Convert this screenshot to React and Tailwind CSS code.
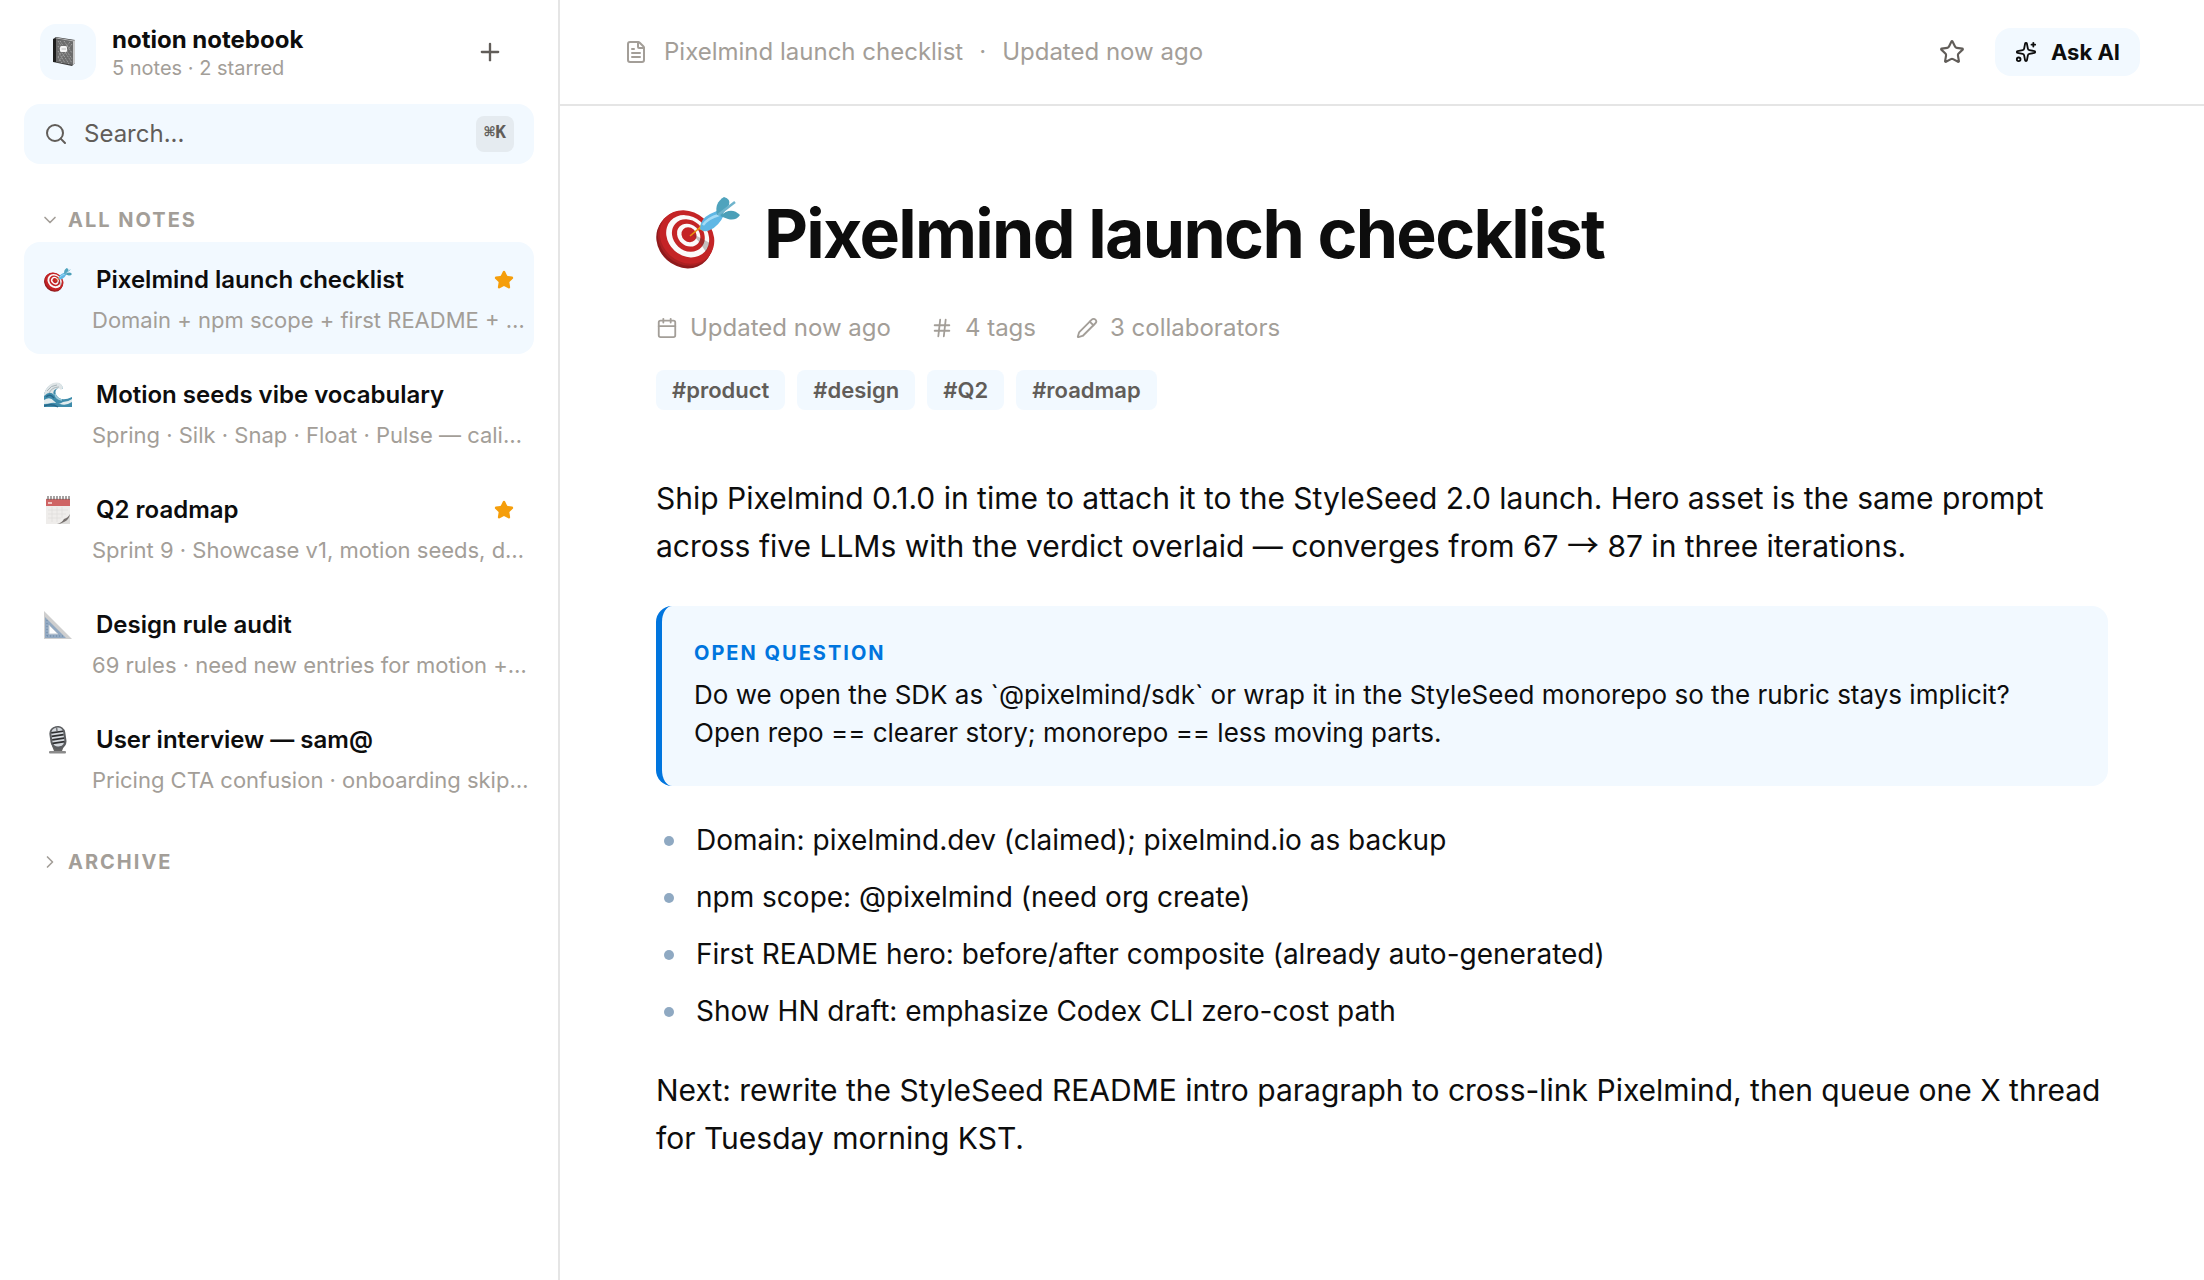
import React, { useState } from "react";
import {
  Calendar,
  ChevronDown,
  ChevronRight,
  FileText,
  Hash,
  Pencil,
  Plus,
  Search,
  Sparkles,
  Star,
} from "lucide-react";

function TargetIcon({ className }) {
  return (
    <svg viewBox="0 0 84 72" className={className} aria-hidden="true">
      <g transform="rotate(42 31 40)">
        <ellipse cx="31.500" cy="45" rx="29.500" ry="25.500" fill="#8f1a1c" />
        <ellipse cx="31" cy="42" rx="29.500" ry="25.500" fill="#ab2022" />
        <ellipse cx="31" cy="40" rx="29" ry="25" fill="#c42426" />
        <ellipse cx="31" cy="39" rx="23" ry="19.500" fill="#fbfafa" />
        <ellipse cx="31" cy="38" rx="17.500" ry="15" fill="#c42426" />
        <ellipse cx="31" cy="37.500" rx="12.500" ry="10.500" fill="#fbfafa" />
        <ellipse cx="31" cy="37" rx="8" ry="7" fill="#c42426" />
      </g>
      <path d="M37 37 L54 46 L50 55 Q44 45 37 38Z" fill="#4a3a3a" opacity=".3" />
      <path d="M34 39 L47 28" stroke="#e8960c" strokeWidth="1.600" />
      <path d="M42 32 L46 26 L48 34Z" fill="#f0a21c" />
      <path d="M44 32 Q44 22 54 17 L63 13 L68 18 Q63 29 54 33 Q48 36 44 32Z" fill="#5fb7e5" />
      <path d="M47 28 Q52 21 63 18" stroke="#a5dbf5" strokeWidth="2.500" fill="none" />
      <path d="M61 18 Q58 6 68 0 Q75 2 73 8 L66 18Z" fill="#4fa3bd" />
      <path d="M64 19 Q75 9 84 18 Q80 24 72 22Z" fill="#4b9fb8" />
      <path d="M62 18 L79 5" stroke="#6fb4cc" strokeWidth="2.500" />
    </svg>
  );
}

function WaveIcon({ className }) {
  return (
    <svg viewBox="0 0 28 26" className={className} aria-hidden="true">
      <path d="M0 25V12Q3 3 11 1Q18 0 19 7Q15 4 12 8Q10 12 15 16Q20 19 28 15V25Z" fill="#3f8cab" />
      <path d="M0 12Q2 4 9 1Q17-1 19 6L17 8Q15 5 12 7Q8 9 10 13Q6 8 0 14Z" fill="#dfe5e7" />
      <path d="M3 9Q7 3 13 3M5 11Q8 5 15 5" stroke="#a9b5ba" fill="none" />
      <path d="M0 18Q6 14 10 19T19 20Q24 20 28 17V20Q22 24 16 22T7 21T0 22Z" fill="#e3ecee" />
      <path d="M2 15Q6 11 10 16M0 24Q8 21 14 25" stroke="#27678a" strokeWidth="1.500" fill="none" />
      <path d="M11 12Q12 17 18 18" stroke="#9cc9d9" strokeWidth="1.500" fill="none" />
    </svg>
  );
}

function PlannerIcon({ className }) {
  return (
    <svg viewBox="0 0 28 28" className={className} aria-hidden="true">
      <rect x="2" y="2" width="24" height="26" fill="#efedeb" />
      <rect x="2" y="3" width="24" height="7" fill="#cf6464" />
      <path d="M4 0V4M7 0V4M10 0V4M13 0V4M16 0V4M19 0V4M22 0V4M25 0V4" stroke="#6c6666" strokeWidth="1.200" />
      <rect x="4" y="6" width="4" height="2" fill="#efc5c2" />
      <path d="M4 14H24M4 18H22M4 22H17M8 11V26M13 11V26M18 11V22" stroke="#dfddda" strokeWidth=".7" />
      <path d="M13 28Q19 26 20 23Q24 22 26 18V28Z" fill="#dedddb" />
      <path d="M13 28Q18 27 20 23Q24 22 26 18Q25 24 20 26Q17 28 13 28Z" fill="#77716f" />
    </svg>
  );
}

function SetSquareIcon({ className }) {
  return (
    <svg viewBox="0 0 28 28" className={className} aria-hidden="true">
      <path d="M0 0L28 28H0Z" fill="#cfcfcf" />
      <path d="M1 6L22 27H1Z" fill="#92a9c2" />
      <path d="M5 14L14 23H5Z" fill="#ffffff" stroke="#c3cbd3" />
      <path d="M3 9V26M3 25H20" stroke="#6d87a3" strokeWidth="1" strokeDasharray="1 2" />
    </svg>
  );
}

function MicIcon({ className }) {
  return (
    <svg viewBox="0 0 28 28" className={className} aria-hidden="true">
      <path d="M8 20L10 25H18L20 20Z" fill="#636363" />
      <rect x="5" y="25" width="17" height="2.500" rx="1" fill="#8b8b8b" />
      <g transform="rotate(-8 14 12)">
        <rect x="6" y="0" width="16" height="23" rx="7.500" fill="#5c5e61" />
        <rect x="8" y="1.500" width="12" height="19" rx="5.500" fill="#d5d9de" />
        <path d="M8 6H20M8 9.500H20M8 13H20M8 16.500H20" stroke="#2d2e30" strokeWidth="1.700" />
        <path d="M14 0V5" stroke="#77797c" strokeWidth="1.500" />
      </g>
    </svg>
  );
}

function NotebookIcon({ className }) {
  return (
    <svg viewBox="0 0 24 30" className={className} aria-hidden="true">
      <path d="M1 2L4 0L23 3V26L20 29L1 25Z" fill="#3b3b3b" />
      <path d="M4 2L21 4V28L4 25Z" fill="#6c6c6c" />
      <path d="M1 2L4 2V25L1 25Z" fill="#1e1e1e" />
      <path d="M21 4L23 3V26L21 28Z" fill="#c9c9c9" />
      <path d="M6 4L20 26M8 4L20 22M12 4L20 16M6 9L17 27M6 14L13 26M6 20L10 26M20 7L7 24M18 5L6 20" stroke="#b5b5b5" strokeWidth=".9" strokeDasharray="1 1" />
      <path d="M4 1L22 4" stroke="#bdbdbd" strokeWidth="1" />
      <rect x="8" y="9" width="7" height="6" rx="1.500" fill="#f5f5f5" />
      <path d="M9.500 12H14" stroke="#aaaaaa" strokeWidth=".8" />
    </svg>
  );
}

const notes = [
  { title: "Pixelmind launch checklist", preview: "Domain + npm scope + first README + …", Icon: TargetIcon, starred: true },
  { title: "Motion seeds vibe vocabulary", preview: "Spring · Silk · Snap · Float · Pulse — cali…", Icon: WaveIcon },
  { title: "Q2 roadmap", preview: "Sprint 9 · Showcase v1, motion seeds, d…", Icon: PlannerIcon, starred: true },
  { title: "Design rule audit", preview: "69 rules · need new entries for motion +…", Icon: SetSquareIcon },
  { title: "User interview — sam@", preview: "Pricing CTA confusion · onboarding skip…", Icon: MicIcon },
];

const tags = ["#product", "#design", "#Q2", "#roadmap"];

const tasks = [
  "Domain: pixelmind.dev (claimed); pixelmind.io as backup",
  "npm scope: @pixelmind (need org create)",
  "First README hero: before/after composite (already auto-generated)",
  "Show HN draft: emphasize Codex CLI zero-cost path",
];

function SectionToggle({ open, children }) {
  const Chevron = open ? ChevronDown : ChevronRight;
  return (
    <button type="button" aria-expanded={open} className="flex items-center gap-2 px-4 text-xl leading-7 font-bold tracking-widest text-[#a39e98]">
      <Chevron size={20} />
      {children}
    </button>
  );
}

function NoteItem({ note, active, onSelect }) {
  const { Icon } = note;
  return (
    <li>
      <button
        type="button"
        onClick={onSelect}
        aria-current={active ? "page" : undefined}
        className={`block h-28 w-full rounded-2xl pt-1 pr-1 pl-5 text-left ${active ? "bg-[#f2f9ff]" : ""}`}
      >
        <span className="flex items-center pr-4">
          <Icon className="w-7 shrink-0" />
          <span className="ml-6 flex-1 truncate text-2xl leading-9 font-semibold text-[#0d0d0d]">{note.title}</span>
          {note.starred && <Star size={20} className="fill-[#f59e0b] text-[#f59e0b]" aria-label="Starred" />}
        </span>
        <span className="mt-1 ml-12 block text-[22px] leading-9 whitespace-nowrap text-[#a39e98]">{note.preview}</span>
      </button>
    </li>
  );
}

function Sidebar() {
  const [selected, setSelected] = useState(0);
  return (
    <aside className="w-[560px] shrink-0 border-r-2 border-[#e5e5e5] px-6 py-6">
      <div className="flex items-center pr-[30px] pl-4">
        <span className="flex size-14 items-center rounded-2xl bg-[#f2f9ff] pl-3">
          <NotebookIcon className="w-6" />
        </span>
        <div className="ml-4 flex-1">
          <p className="text-2xl leading-8 font-bold text-[#0d0d0d]">notion notebook</p>
          <p className="text-xl leading-6 text-[#a39e98]">5 notes · 2 starred</p>
        </div>
        <button type="button" aria-label="New note" className="text-[#615d59]">
          <Plus size={28} />
        </button>
      </div>

      <label className="mt-6 flex h-15 items-center gap-4 rounded-2xl bg-[#f2f9ff] px-5 text-[#615d59]">
        <Search size={24} className="shrink-0" />
        <input
          type="search"
          aria-label="Search notes"
          placeholder="Search..."
          className="min-w-0 flex-1 bg-transparent text-2xl outline-none placeholder:text-[#615d59]"
        />
        <kbd className="flex h-9 items-center rounded-lg bg-[#e5ebf0] px-2 pb-1 font-['DejaVu_Sans_Mono','Liberation_Mono',monospace] text-lg font-bold">⌘K</kbd>
      </label>

      <nav className="mt-[42px] flex flex-col" aria-label="Notes">
        <SectionToggle open>ALL NOTES</SectionToggle>
        <ul className="mt-2 mb-[34px] flex flex-col gap-[3px]">
          {notes.map((note, i) => (
            <NoteItem key={note.title} note={note} active={i === selected} onSelect={() => setSelected(i)} />
          ))}
        </ul>
        <SectionToggle open={false}>ARCHIVE</SectionToggle>
      </nav>
    </aside>
  );
}

function TopBar() {
  return (
    <header className="flex h-[106px] items-center border-b-2 border-[#e5e5e5] px-16">
      <div className="flex flex-1 items-center gap-4 text-2xl text-[#a39e98]">
        <FileText size={24} />
        <span>Pixelmind launch checklist</span>
        <span>·</span>
        <span>Updated now ago</span>
      </div>
      <button type="button" aria-label="Star note" className="mr-[30px] text-[#615d59]">
        <Star size={26} />
      </button>
      <button type="button" className="flex h-12 items-center gap-3.5 rounded-2xl bg-[#f2f9ff] px-5 text-[22px] font-bold text-[#0d0d0d]">
        <Sparkles size={22} />
        Ask AI
      </button>
    </header>
  );
}

function Article() {
  return (
    <article className="px-24 pt-[79px] pb-20 text-[#0d0d0d]">
      <h1 className="flex items-center gap-6 text-[68px] leading-[96px] font-bold tracking-tight">
        <TargetIcon className="w-[84px]" />
        Pixelmind launch checklist
      </h1>

      <div className="mt-[29px] flex items-center gap-10 text-2xl leading-9 text-[#a39e98]">
        <span className="flex items-center gap-3"><Calendar size={22} />Updated now ago</span>
        <span className="flex items-center gap-3"><Hash size={22} />4 tags</span>
        <span className="flex items-center gap-3"><Pencil size={22} />3 collaborators</span>
      </div>

      <ul className="mt-6 flex gap-3">
        {tags.map((tag) => (
          <li key={tag} className="rounded-lg bg-[#f2f9ff] px-4 text-[22px] leading-10 font-semibold text-[#615d59]">{tag}</li>
        ))}
      </ul>

      <p className="mt-16 text-[30px] leading-[48px]">
        Ship Pixelmind 0.1.0 in time to attach it to the StyleSeed 2.0 launch. Hero asset is the same prompt across five
        LLMs with the verdict overlaid — converges from 67{" "}
        <span className="font-['Noto_Sans_CJK_JP',sans-serif] text-[32px] leading-none">→</span> 87 in three iterations.
      </p>

      <aside className="mt-9 rounded-2xl border-l-6 border-[#0075de] bg-[#f2f9ff] px-8 pt-8 pb-[34px]">
        <p className="text-xl leading-[30px] font-bold tracking-widest text-[#0075de]">OPEN QUESTION</p>
        <p className="mt-2 text-[26px] leading-[38px]">
          Do we open the SDK as `@pixelmind/sdk` or wrap it in the StyleSeed monorepo so the rubric stays implicit?
          <br />
          Open repo == clearer story; monorepo == less moving parts.
        </p>
      </aside>

      <ul className="mt-8 flex flex-col gap-3">
        {tasks.map((task) => (
          <li key={task} className="flex items-center gap-[22px] pl-2 text-[28px] leading-[45px]">
            <span className="size-2.5 shrink-0 rounded-full bg-[#8fa9c2]" />
            {task}
          </li>
        ))}
      </ul>

      <p className="mt-8 text-[30px] leading-[48px]">
        Next: rewrite the StyleSeed README intro paragraph to cross-link Pixelmind, then queue one X thread for Tuesday
        morning KST.
      </p>
    </article>
  );
}

export default function App() {
  return (
    <div className="flex min-h-screen bg-white font-['Inter','Liberation_Sans',sans-serif]">
      <Sidebar />
      <main className="min-w-0 flex-1">
        <TopBar />
        <Article />
      </main>
    </div>
  );
}
